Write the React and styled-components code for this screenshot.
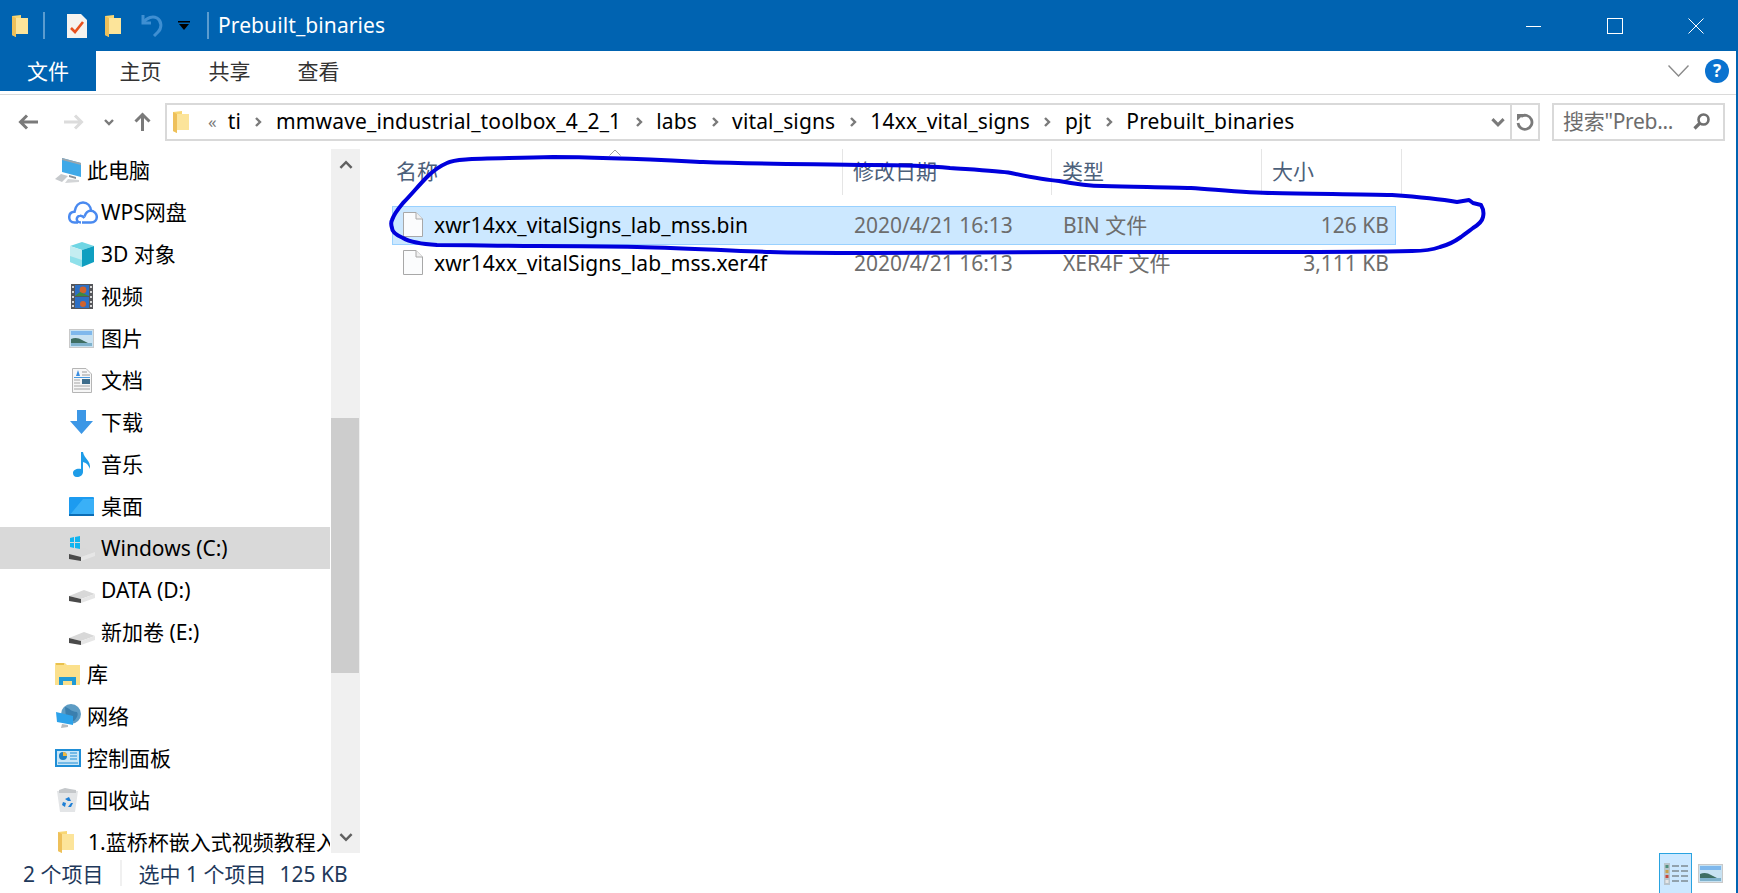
import React from 'react';
import styled, { createGlobalStyle } from 'styled-components';

const FONT = '"Noto Sans", "Noto Sans CJK SC", sans-serif';

const GlobalStyle = createGlobalStyle`
    html, body {
        margin: 0;
        padding: 0;
        background: #fff;
    }
    body {
        font-family: ${FONT};
        font-size: 21px;
        line-height: 28px;
        overflow: hidden;
    }
`;

const Folder = ({ w = 16, h = 22 }) => (
    <svg width={w} height={h} viewBox="0 0 16 22">
        <path d="M0 1 L9 0 L9 3 L16 3 L16 19 L4 19 L4 22 L0 20 Z" fill="#f8d775" />
        <path d="M4 3 L16 3 L16 19 L4 19 Z" fill="#fce49a" />
        <path d="M0 1 L4 3 L4 22 L0 20 Z" fill="#eec05a" />
    </svg>
);

const FileIcon = () => (
    <svg width="20" height="25" viewBox="0 0 20 25">
        <path d="M.5.5 H13 L19.5 7 V24.5 H.5 Z" fill="#fbfcfd" stroke="#a8a8a8" />
        <path d="M13 .5 V7 H19.5" fill="#f0f0f0" stroke="#a8a8a8" />
    </svg>
);

const Computer = () => (
    <svg width="27" height="25" viewBox="0 0 27 25">
        <path d="M7 0 L26 5 V19 L7 14 Z" fill="#3fa9e8" />
        <path d="M7 0 L26 5 V7 L7 2 Z" fill="#9aa6ae" />
        <path d="M14 17 L21 19 V21 L14 19 Z" fill="#8b9299" />
        <path d="M6 16 L13 18 L7 24 L0 21 Z" fill="#c6c9cc" />
        <path d="M13 21 L24 22 L24 24 L10 25 Z" fill="#d3d5d7" />
    </svg>
);

const Cloud = () => (
    <svg width="30" height="23" viewBox="0 0 30 23" fill="none" stroke="#4a8af0" strokeWidth="2.5">
        <path d="M10 21.5 H6.5 C3 21.5 1.2 19 1.2 16.2 C1.2 13 3.5 11 6.5 10.8 C7.5 5 11 1.5 15 1.5 C19.5 1.5 22.5 5 23 9.5" />
        <path d="M14 21.5 H23 C26.5 21.5 28.8 19 28.8 15.8 C28.8 12.5 26 9.8 22.5 9.8 C19 9.8 17.5 12.5 16.5 15.5" />
        <path d="M16.5 17 C15 15.2 13.5 14.6 12 14.8 C9.5 15 8.6 17 8.8 18.5 C9 20.5 10.8 21.5 13 21.5" />
    </svg>
);

const Cube = () => (
    <svg width="26" height="25" viewBox="0 0 26 25">
        <path d="M13 0 L25 4 L13 8 L1 4 Z" fill="#6fd6e4" />
        <path d="M1 4 L13 8 V25 L1 20 Z" fill="#c4edf1" />
        <path d="M25 4 L13 8 V25 L25 20 Z" fill="#0f9fc0" />
        <path d="M1 14 L13 18 V25 L1 20 Z" fill="#8fe0ea" />
    </svg>
);

const Film = () => (
    <svg width="22" height="25" viewBox="0 0 22 25">
        <rect width="22" height="25" fill="#55565a" />
        <rect x="4" y="1" width="14" height="11" fill="#2d6fc4" />
        <rect x="4" y="13" width="14" height="11" fill="#2d6fc4" />
        <circle cx="12" cy="6" r="3.4" fill="#d0632e" />
        <path d="M4 12 L9 8 L18 12 Z" fill="#3f8a3f" />
        <circle cx="12" cy="20" r="3" fill="#d0632e" />
        <path d="M1 2 h2 v2 h-2 Z M1 7 h2 v2 h-2 Z M1 12 h2 v2 h-2 Z M1 17 h2 v2 h-2 Z M1 21 h2 v2 h-2 Z M19 2 h2 v2 h-2 Z M19 7 h2 v2 h-2 Z M19 12 h2 v2 h-2 Z M19 17 h2 v2 h-2 Z M19 21 h2 v2 h-2 Z" fill="#d6d6d6" />
    </svg>
);

const Picture = ({ w = 25, h = 19 }) => (
    <svg width={w} height={h} viewBox="0 0 25 19">
        <rect x=".5" y=".5" width="24" height="18" fill="#c8e2f2" stroke="#c9c9c9" />
        <path d="M2 2 H23 V6 H2 Z" fill="#7fb8ec" />
        <path d="M2 10 C6 8 10 9 13 11 L19 14 H2 Z" fill="#3e6e62" />
        <path d="M2 14 H23 V17 H2 Z" fill="#7fb2cc" />
    </svg>
);

const Doc = () => (
    <svg width="20" height="25" viewBox="0 0 20 25">
        <path d="M.5.5 H14 L19.5 6 V24.5 H.5 Z" fill="#f7f7f7" stroke="#b5b5b5" />
        <path d="M4 8 L6 2 L8 8 Z" fill="#3a8de0" />
        <path d="M10 4 H15 M10 7 H18" stroke="#9a9a9a" />
        <path d="M2 9.5 H18" stroke="#4a9ae0" />
        <rect x="10" y="11" width="8" height="5" fill="#3f6e8c" />
        <path d="M2 12 H8 M2 15 H8 M2 18 H18 M2 21 H18" stroke="#a5a5a5" />
    </svg>
);

const Download = () => (
    <svg width="23" height="24" viewBox="0 0 23 24">
        <path d="M7 0 H16 V11 H23 L11.5 24 L0 11 H7 Z" fill="#3c97e6" />
    </svg>
);

const Music = () => (
    <svg width="18" height="25" viewBox="0 0 18 25">
        <path d="M8 0 H10 C11 7 18 8 17 17 C15 12 13 11 10 10 V20 C10 23 7 25 4 25 C1 25 0 23 0 21 C0 18 4 16 8 17 Z" fill="#1e9ce8" />
    </svg>
);

const Desktop = () => (
    <svg width="25" height="19" viewBox="0 0 25 19">
        <rect width="25" height="19" rx="1" fill="#1c9bf0" />
        <path d="M0 19 L14 2 H25 V17 H0 Z" fill="#3ab0f7" />
        <rect y="17" width="25" height="2" fill="#0b6db5" />
    </svg>
);

const Drive = ({ win }) => (
    <svg width="26" height="26" viewBox="0 0 26 26">
        {win && <path d="M1 3 L5 2 V7 H1 Z M6 2 L11 1 V7 H6 Z M1 8 H5 V13 L1 12 Z M6 8 H11 V14 L6 13 Z" fill="#10b4f0" />}
        <path d="M0 19 L15 13 L26 17 L12 22 Z" fill="#d8d8d8" />
        <path d="M0 19 L12 22 V26 L0 24 Z" fill="#4a4a4a" />
        <path d="M12 22 L26 17 V21 L12 26 Z" fill="#e6e6e6" />
    </svg>
);

const Library = () => (
    <svg width="25" height="22" viewBox="0 0 25 22">
        <path d="M0 0 H10 L12 2 H25 V22 H0 Z" fill="#fbe08c" />
        <rect x="1" y="0" width="8" height="2" fill="#e9c14e" />
        <path d="M4 22 V14 H21 V22 H17 V18 H8 V22 Z" fill="#1f9ad6" />
    </svg>
);

const Network = () => (
    <svg width="25" height="25" viewBox="0 0 25 25">
        <circle cx="15" cy="10" r="10" fill="#5d9cc4" />
        <path d="M9 3 C14 4 15 8 21 8 C23 11 20 15 18 17 L10 14 Z" fill="#3a7fae" />
        <path d="M0 8 L17 12 V21 L1 18 Z" fill="#2da2ea" />
        <path d="M6 20 L12 21 V23 L5 24 Z" fill="#b7bcc0" />
    </svg>
);

const Control = () => (
    <svg width="26" height="18" viewBox="0 0 26 18">
        <rect width="26" height="18" fill="#1f8ed6" />
        <rect x="2" y="2" width="22" height="14" fill="#c9e6f7" />
        <circle cx="8" cy="7" r="4" fill="#1f7fc0" />
        <path d="M8 7 V3 A4 4 0 0 1 12 7 Z" fill="#f0b840" />
        <path d="M15 4 H22 M15 7 H22 M15 10 H22 M3 14 H23" stroke="#1f8ed6" />
    </svg>
);

const Recycle = () => (
    <svg width="23" height="25" viewBox="0 0 23 25">
        <path d="M1 3 L22 3 L19 24 L4 24 Z" fill="#e3e5e7" />
        <path d="M3 2 L9 0 L14 1 L20 2 L20 5 L3 5 Z" fill="#c4c7ca" />
        <path d="M9 11 L13 9 L15 13 L12 13 Z M7 14 L10 15 L9 19 L6 17 Z M15 15 L17 15 L15 19 L12 19 Z" fill="#1d7fd6" />
    </svg>
);

const Chevron = ({ dir = 'right', size = 10, color = '#6d6d6d', width = 2.4 }) => {
    const d = {
        right: 'M3 1 L7 5 L3 9',
        down: 'M1 3 L5 7 L9 3',
        up: 'M1 7 L5 3 L9 7',
    }[dir];
    return (
        <svg width={size} height={size} viewBox="0 0 10 10" fill="none" stroke={color} strokeWidth={width}>
            <path d={d} />
        </svg>
    );
};

const NAV = [
    { icon: <Computer />, label: '此电脑', indent: 55, text: 87 },
    { icon: <Cloud />, label: 'WPS网盘', indent: 68, text: 101 },
    { icon: <Cube />, label: '3D 对象', indent: 69, text: 101 },
    { icon: <Film />, label: '视频', indent: 71, text: 101 },
    { icon: <Picture />, label: '图片', indent: 69, text: 101 },
    { icon: <Doc />, label: '文档', indent: 72, text: 101 },
    { icon: <Download />, label: '下载', indent: 70, text: 101 },
    { icon: <Music />, label: '音乐', indent: 73, text: 101 },
    { icon: <Desktop />, label: '桌面', indent: 69, text: 101 },
    { icon: <Drive win />, label: 'Windows (C:)', indent: 69, text: 101, active: true },
    { icon: <Drive />, label: 'DATA (D:)', indent: 69, text: 101 },
    { icon: <Drive />, label: '新加卷 (E:)', indent: 69, text: 101 },
    { icon: <Library />, label: '库', indent: 55, text: 87 },
    { icon: <Network />, label: '网络', indent: 56, text: 87 },
    { icon: <Control />, label: '控制面板', indent: 55, text: 87 },
    { icon: <Recycle />, label: '回收站', indent: 56, text: 87 },
    { icon: <Folder />, label: '1.蓝桥杯嵌入式视频教程入', indent: 58, text: 88 },
];

const CRUMBS = ['mmwave_industrial_toolbox_4_2_1', 'labs', 'vital_signs', '14xx_vital_signs', 'pjt', 'Prebuilt_binaries'];

const FILES = [
    { name: 'xwr14xx_vitalSigns_lab_mss.bin', date: '2020/4/21 16:13', type: 'BIN 文件', size: '126 KB', selected: true },
    { name: 'xwr14xx_vitalSigns_lab_mss.xer4f', date: '2020/4/21 16:13', type: 'XER4F 文件', size: '3,111 KB' },
];

const App = () => (
    <Window>
        <GlobalStyle />
        <TitleBar>
            <QuickIcon $left={12} $width={16}><Folder /></QuickIcon>
            <TitleSep $left={15} />
            <QuickIcon $left={22} $width={20}>
                <svg width="20" height="24" viewBox="0 0 20 24">
                    <path d="M0 0 H14 L20 6 V24 H0 Z" fill="#f5f3ef" />
                    <path d="M4 14 L8 18 L16 8" fill="none" stroke="#e8501e" strokeWidth="2.6" />
                </svg>
            </QuickIcon>
            <QuickIcon $left={18} $width={16}><Folder /></QuickIcon>
            <QuickIcon $left={20} $width={22}>
                <svg width="22" height="23" viewBox="0 0 22 23" fill="none" stroke="#3f8fd2" strokeWidth="3">
                    <path d="M2 1 V9 H10" />
                    <path d="M2 9 C6 3 12 2 16 4 C21 7 21 14 17 18 L13 22" />
                </svg>
            </QuickIcon>
            <QuickIcon $left={15} $width={12}>
                <svg width="12" height="9" viewBox="0 0 12 9">
                    <rect width="12" height="1.5" fill="#000" />
                    <path d="M1 3 H11 L6 9 Z" fill="#000" />
                </svg>
            </QuickIcon>
            <TitleSep $left={17} />
            <TitleText>Prebuilt_binaries</TitleText>
            <WindowButtons>
                <WindowButton>
                    <svg width="16" height="16" viewBox="0 0 16 16" stroke="#fff" fill="none"><path d="M0 8.5 H15" /></svg>
                </WindowButton>
                <WindowButton>
                    <svg width="16" height="16" viewBox="0 0 16 16" stroke="#fff" fill="none"><rect x=".5" y=".5" width="15" height="15" /></svg>
                </WindowButton>
                <WindowButton>
                    <svg width="16" height="16" viewBox="0 0 16 16" stroke="#fff" fill="none"><path d="M.5 .5 L15.5 15.5 M15.5 .5 L.5 15.5" /></svg>
                </WindowButton>
            </WindowButtons>
        </TitleBar>

        <TabRow>
            <FileTab>文件</FileTab>
            <Tab>主页</Tab>
            <Tab>共享</Tab>
            <Tab>查看</Tab>
            <RibbonRight>
                <svg width="21" height="12" viewBox="0 0 21 12" fill="none" stroke="#8a8a8a" strokeWidth="1.4">
                    <path d="M.5 .5 L10.5 11 L20.5 .5" />
                </svg>
                <Help>?</Help>
            </RibbonRight>
        </TabRow>

        <AddressRow>
            <NavArrow $left={18}>
                <svg width="20" height="16" viewBox="0 0 20 16" fill="none" stroke="#7a7a7a" strokeWidth="3">
                    <path d="M20 8 H3 M9 1.5 L2.5 8 L9 14.5" />
                </svg>
            </NavArrow>
            <NavArrow $left={26}>
                <svg width="20" height="16" viewBox="0 0 20 16" fill="none" stroke="#dcdcdc" strokeWidth="3">
                    <path d="M0 8 H17 M11 1.5 L17.5 8 L11 14.5" />
                </svg>
            </NavArrow>
            <NavArrow $left={20}><Chevron dir="down" color="#7a7a7a" /></NavArrow>
            <NavArrow $left={20}>
                <svg width="17" height="19" viewBox="0 0 17 19" fill="none" stroke="#7a7a7a" strokeWidth="3">
                    <path d="M8.5 19 V3 M1.5 9.5 L8.5 2.5 L15.5 9.5" />
                </svg>
            </NavArrow>
            <AddressBar>
                <BarFolder><Folder /></BarFolder>
                <Overflow>«</Overflow>
                <Crumb $left={11}>ti</Crumb>
                {CRUMBS.map((c) => (
                    <React.Fragment key={c}>
                        <CrumbSep><Chevron color="#7a7a7a" /></CrumbSep>
                        <Crumb>{c}</Crumb>
                    </React.Fragment>
                ))}
                <BarTools>
                    <Chevron dir="down" size={14} color="#7a7a7a" width={2.2} />
                    <RefreshBox>
                        <svg width="18" height="18" viewBox="0 0 18 18" fill="none" stroke="#7a7a7a" strokeWidth="2.8">
                            <path d="M5 3.5 A7 7 0 1 1 2 10" />
                            <path d="M1 1 H8 L1 8 Z" fill="#7a7a7a" stroke="none" />
                        </svg>
                    </RefreshBox>
                </BarTools>
            </AddressBar>
            <SearchBox>
                <SearchText>搜索"Preb...</SearchText>
                <svg width="17" height="17" viewBox="0 0 17 17" fill="none" stroke="#6f6f6f" strokeWidth="2.6">
                    <circle cx="10.5" cy="6.5" r="5" />
                    <path d="M7 10 L1.5 15.5" strokeWidth="3.2" />
                </svg>
            </SearchBox>
        </AddressRow>

        <Body>
            <Nav>
                {NAV.map((n) => (
                    <NavRow key={n.label} $active={n.active}>
                        <NavIcon $left={n.indent} $text={n.text}>{n.icon}</NavIcon>
                        {n.label}
                    </NavRow>
                ))}
            </Nav>
            <Scrollbar>
                <ScrollGap $height={269}>
                    <ArrowAt><Chevron dir="up" size={14} color="#606060" width={1.8} /></ArrowAt>
                </ScrollGap>
                <ScrollThumb />
                <ScrollRest>
                    <ArrowAt><Chevron dir="down" size={14} color="#606060" width={1.8} /></ArrowAt>
                </ScrollRest>
            </Scrollbar>
            <Content>
                <HeaderRow>
                    <SortMark>
                        <svg width="12" height="7" viewBox="0 0 12 7" fill="none" stroke="#a0a0a0"><path d="M.5 6.5 L6 1 L11.5 6.5" /></svg>
                    </SortMark>
                    <HeaderCell $first>名称</HeaderCell>
                    <HeaderCell>修改日期</HeaderCell>
                    <HeaderCell>类型</HeaderCell>
                    <HeaderCell>大小</HeaderCell>
                </HeaderRow>
                {FILES.map((f) => (
                    <FileRow key={f.name} $selected={f.selected}>
                        <NameCell><FileIcon />{f.name}</NameCell>
                        <MetaCell>{f.date}</MetaCell>
                        <MetaCell>{f.type}</MetaCell>
                        <SizeCell>{f.size}</SizeCell>
                    </FileRow>
                ))}
            </Content>
        </Body>

        <StatusBar>
            <StatusText $left={23}>2 个项目</StatusText>
            <StatusSep />
            <StatusText $left={16}>选中 1 个项目</StatusText>
            <StatusText $left={13}>125 KB</StatusText>
            <ViewButtons>
                <DetailView>
                    <svg width="24" height="24" viewBox="0 0 24 24">
                        <rect x="0" y="1" width="6" height="22" fill="#b8c4cc" />
                        <path d="M1.5 3 h3 v3 h-3 Z" fill="#4d8f7c" />
                        <path d="M1.5 8 h3 v3 h-3 Z" fill="#c8a24a" />
                        <path d="M1.5 13 h3 v3 h-3 Z" fill="#c8483c" />
                        <path d="M1.5 18 h3 v3 h-3 Z" fill="#e6e6e6" />
                        <path d="M8 4 H15 M17 4 H24 M8 9 H15 M17 9 H24 M8 14 H15 M17 14 H24 M8 19 H15 M17 19 H24" stroke="#7d8a92" strokeWidth="1.4" />
                    </svg>
                </DetailView>
                <Picture w={25} h={19} />
            </ViewButtons>
        </StatusBar>

        <EdgeMark />
        <Scribble viewBox="0 0 1738 893" fill="none" stroke="#0000dc" strokeWidth="4" strokeLinecap="round" strokeLinejoin="round">
            <path d="M447 163 C456 158 480 159 553 157 C600 157 640 159 703 162 C760 164 820 164 870 165 C900 165 930 166 950 168 C980 170 1000 171 1011 173 C1030 177 1045 180 1059 181 C1075 184 1090 186 1103 186 C1140 187 1170 187 1191 188 C1220 190 1250 193 1272 193 C1310 194 1360 194 1392 195 C1420 197 1440 199 1457 202 L1463 201 L1469 200 L1473 203 L1481 205 C1484 210 1484 213 1483 217 C1482 222 1478 225 1473 228 C1469 231 1466 233 1461 237 C1454 242 1448 245 1440 247 C1432 250 1424 251 1412 251 C1370 252 1320 252 1272 252 C1200 252 1140 252 1071 252 C1000 252 930 253 870 253 C830 253 800 253 770 252 C720 250 680 248 637 247 C600 246 570 246 537 246 C500 246 470 245 437 245 C420 244 410 242 403 238 C396 235 392 232 392 228 C391 225 391 222 392 220 C394 214 398 209 403 203 C411 195 419 185 427 177 C433 171 440 166 447 163 Z" />
        </Scribble>
    </Window>
);

export default App;

const Window = styled.div`
    position: relative;
    display: flex;
    flex-direction: column;
    width: 1738px;
    height: 893px;
    overflow: hidden;
    border-right: 2px solid #0063b1;
    box-sizing: border-box;
    background: #fff;
    color: #000;
`;

const EdgeMark = styled.div`
    position: absolute;
    top: 0;
    right: -2px;
    width: 2px;
    height: 36px;
    background: linear-gradient(#6f8296 0, #6f8296 20px, #8a1226 20px, #8a1226 36px);
`;

const TitleBar = styled.div`
    display: flex;
    align-items: center;
    flex: 0 0 51px;
    background: #0063b1;
`;

const QuickIcon = styled.div`
    display: flex;
    align-items: center;
    margin-left: ${(p) => p.$left}px;
    width: ${(p) => p.$width}px;
`;

const TitleSep = styled.div`
    width: 2px;
    height: 27px;
    margin-left: ${(p) => p.$left}px;
    background: #5b9ccf;
`;

const TitleText = styled.div`
    margin-left: 9px;
    margin-bottom: 2px;
    color: #fff;
    letter-spacing: 0.1px;
`;

const WindowButtons = styled.div`
    display: flex;
    margin-left: auto;
`;

const WindowButton = styled.div`
    display: flex;
    align-items: center;
    justify-content: center;
    width: 81px;
    height: 51px;
`;

const TabRow = styled.div`
    display: flex;
    align-items: stretch;
    flex: 0 0 40px;
    margin-bottom: 3px;
`;

const FileTab = styled.div`
    display: flex;
    align-items: center;
    justify-content: center;
    width: 96px;
    background: #0063b1;
    color: #fff;
`;

const Tab = styled.div`
    display: flex;
    align-items: center;
    justify-content: center;
    width: 89px;
    color: #333;
`;

const RibbonRight = styled.div`
    display: flex;
    align-items: center;
    gap: 16px;
    margin-left: auto;
    padding-right: 7px;
`;

const Help = styled.div`
    display: flex;
    align-items: center;
    justify-content: center;
    width: 24px;
    height: 24px;
    border-radius: 50%;
    background: #0a72cf;
    color: #fff;
    font-size: 17px;
    font-weight: 700;
`;

const AddressRow = styled.div`
    display: flex;
    align-items: center;
    flex: 0 0 54px;
    margin-bottom: 1px;
    border-top: 1px solid #dadada;
    box-sizing: border-box;
`;

const NavArrow = styled.div`
    display: flex;
    align-items: center;
    margin-left: ${(p) => p.$left}px;
`;

const AddressBar = styled.div`
    display: flex;
    align-items: center;
    width: 1375px;
    height: 38px;
    margin-left: 14px;
    border: 2px solid #d9d9d9;
    box-sizing: border-box;
    white-space: nowrap;
`;

const BarFolder = styled.div`
    display: flex;
    margin-left: 6px;
`;

const Overflow = styled.div`
    margin-left: 19px;
    color: #7a7a7a;
    font-size: 17px;
`;

const Crumb = styled.div`
    margin-left: ${(p) => p.$left || 0}px;
    margin-bottom: 2px;
    letter-spacing: 0.15px;
`;

const CrumbSep = styled.div`
    display: flex;
    align-items: center;
    margin: 0 12.5px;
`;

const BarTools = styled.div`
    display: flex;
    align-items: center;
    height: 100%;
    margin-left: auto;
`;

const RefreshBox = styled.div`
    display: flex;
    align-items: center;
    justify-content: center;
    width: 26px;
    height: 100%;
    margin-left: 5px;
    border-left: 2px solid #d9d9d9;
`;

const SearchBox = styled.div`
    display: flex;
    align-items: center;
    justify-content: space-between;
    width: 173px;
    height: 38px;
    margin-left: 12px;
    padding: 0 13px 0 9px;
    border: 2px solid #d9d9d9;
    box-sizing: border-box;
`;

const SearchText = styled.div`
    margin-bottom: 2px;
    color: #6d6d6d;
    white-space: nowrap;
    letter-spacing: -0.3px;
`;

const Body = styled.div`
    display: flex;
    flex: 1;
    min-height: 0;
`;

const Nav = styled.div`
    flex: 0 0 330px;
    overflow: hidden;
    white-space: nowrap;
`;

const NavRow = styled.div`
    display: flex;
    align-items: center;
    height: 42px;
    background: ${(p) => (p.$active ? '#d9d9d9' : 'transparent')};
`;

const NavIcon = styled.div`
    display: flex;
    align-items: center;
    flex: 0 0 ${(p) => p.$text - p.$left}px;
    margin-left: ${(p) => p.$left}px;
`;

const Scrollbar = styled.div`
    display: flex;
    flex-direction: column;
    flex: 0 0 29px;
    margin-left: 1px;
    background: #f0f0f0;
`;

const ScrollGap = styled.div`
    position: relative;
    flex: 0 0 ${(p) => p.$height}px;
`;

const ScrollRest = styled.div`
    position: relative;
    display: flex;
    flex: 1;
    align-items: flex-end;
`;

const ScrollThumb = styled.div`
    flex: 0 0 255px;
    margin-right: 1px;
    background: #cdcdcd;
`;

const ArrowAt = styled.div`
    display: flex;
    justify-content: center;
    width: 100%;
    padding: 9px 0;
`;

const Content = styled.div`
    flex: 1;
    padding-left: 32px;
`;

const HeaderRow = styled.div`
    position: relative;
    display: grid;
    grid-template-columns: 451px 209px 210px 140px;
    width: 1010px;
    height: 46px;
    margin-bottom: 11px;
`;

const SortMark = styled.div`
    position: absolute;
    left: 217px;
    top: 0;
    display: flex;
`;

const HeaderCell = styled.div`
    display: flex;
    align-items: center;
    padding-left: ${(p) => (p.$first ? 4 : 10)}px;
    padding-bottom: 2px;
    border-right: 1px solid #e5e5e5;
    color: #4c607a;
`;

const FileRow = styled.div`
    display: grid;
    grid-template-columns: 451px 209px 210px 134px;
    align-items: center;
    width: 1004px;
    height: ${(p) => (p.$selected ? 39 : 37)}px;
    padding-bottom: 2px;
    box-sizing: border-box;
    background: ${(p) => (p.$selected ? '#cce8ff' : 'transparent')};
    border: 1px solid ${(p) => (p.$selected ? '#99d1ff' : 'transparent')};
`;

const NameCell = styled.div`
    display: flex;
    align-items: center;
    gap: 11px;
    padding-left: 10px;
    color: #000;
    letter-spacing: 0.1px;
    white-space: nowrap;
`;

const MetaCell = styled.div`
    padding-left: 10px;
    color: #6d6d6d;
    white-space: nowrap;
`;

const SizeCell = styled(MetaCell)`
    padding-right: 8px;
    text-align: right;
`;

const StatusBar = styled.div`
    display: flex;
    align-items: center;
    flex: 0 0 40px;
`;

const StatusText = styled.div`
    margin-left: ${(p) => p.$left}px;
    margin-top: 2px;
    color: #1e395b;
    white-space: nowrap;
`;

const StatusSep = styled.div`
    width: 2px;
    height: 26px;
    margin-left: 17px;
    background: #f0f0f0;
`;

const ViewButtons = styled.div`
    display: flex;
    align-items: center;
    gap: 6px;
    height: 100%;
    margin-left: auto;
    padding-right: 13px;
`;

const DetailView = styled.div`
    display: flex;
    align-items: center;
    justify-content: center;
    width: 33px;
    height: 40px;
    box-sizing: border-box;
    background: #cce8ff;
    border: 1px solid #29a3e0;
    border-width: 1px 1px 0;
`;

const Scribble = styled.svg`
    position: absolute;
    top: 0;
    left: 0;
    width: 1738px;
    height: 893px;
    pointer-events: none;
`;
